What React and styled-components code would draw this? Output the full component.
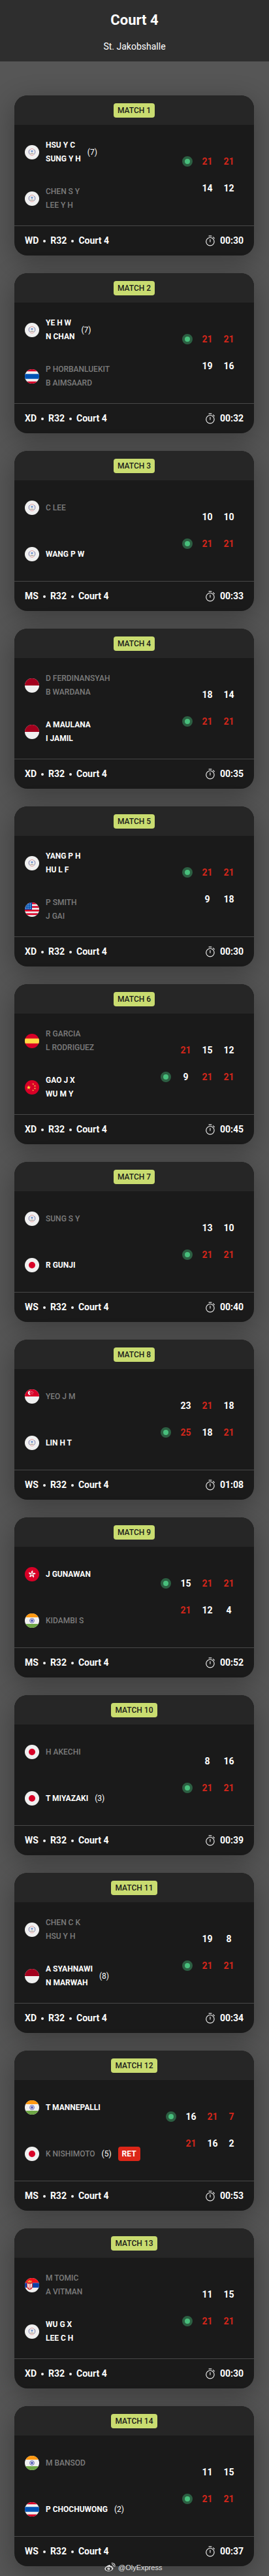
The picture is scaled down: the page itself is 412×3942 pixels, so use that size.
import React from 'react';
import styled, { createGlobalStyle } from 'styled-components';

const Global = createGlobalStyle`
  *, *::before, *::after { box-sizing: border-box; }
  html, body { margin: 0; padding: 0; }
  body {
    background: #565656;
    color: #fff;
    font-family: Roboto, "Liberation Sans", sans-serif;
  }
`;

const Page = styled.div`
  position: relative;
  width: 412px;
  height: 3942px;
  overflow: hidden;
  background: #565656;
`;

const Header = styled.header`
  height: 94px;
  padding-top: 16px;
  background: #2e2e2e;
  text-align: center;
`;

const Title = styled.h1`
  margin: 0;
  font-size: 22px;
  line-height: 29px;
  font-weight: 700;
`;

const Venue = styled.p`
  margin: 14px 0 0;
  font-size: 14px;
  line-height: 24px;
`;

const List = styled.main`
  display: flex;
  flex-direction: column;
  gap: 27px;
  padding: 52px 23px 0 22px;
`;

const Card = styled.article`
  display: flex;
  flex-direction: column;
  height: 245px;
  border-radius: 20px;
  background: #1a1a1a;
  box-shadow: 0 10px 40px rgba(0, 0, 0, 0.3);
`;

const CardTop = styled.div`
  display: flex;
  align-items: center;
  justify-content: center;
  height: 45px;
  padding-top: 1px;
  border-radius: 20px 20px 0 0;
  background: #262626;
`;

const Badge = styled.span`
  height: 22px;
  padding: 0 6.3px;
  border-radius: 4px;
  background: #c9dc70;
  color: #1a1a1a;
  font-size: 12px;
  line-height: 22px;
  font-weight: 500;
`;

const CardBody = styled.div`
  display: flex;
  justify-content: space-between;
  height: 154px;
  padding: 20px 22px 0 16px;
`;

const Teams = styled.div`
  display: flex;
  flex-direction: column;
  gap: 27px;
`;

const Team = styled.div`
  display: flex;
  align-items: center;
  height: 44px;
`;

const Flag = styled.svg`
  flex: none;
  width: 22px;
  height: 22px;
  margin-right: 10px;
  border-radius: 50%;
`;

const Names = styled.div`
  color: ${(p) => (p.$won ? '#fff' : '#7c7c7c')};
  font-size: 12px;
  line-height: 21px;
  font-weight: ${(p) => (p.$won ? 700 : 500)};
  white-space: nowrap;
`;

const Seed = styled.span`
  margin-left: 10px;
  font-size: 12px;
  line-height: 22px;
`;

const Retired = styled.span`
  height: 22px;
  margin-left: 10px;
  padding: 0 6px;
  border-radius: 4px;
  background: #dc2618;
  font-size: 12px;
  line-height: 22px;
  font-weight: 700;
`;

const Scores = styled.div`
  display: flex;
  flex-direction: column;
  align-items: flex-end;
  padding-top: 15px;
`;

const ScoreRow = styled.div`
  display: flex;
  align-items: center;
  height: 41px;
`;

const WinDot = styled.i`
  width: 16px;
  height: 16px;
  margin-right: 6px;
  border: 4px solid #2c5f42;
  border-radius: 50%;
  background: #48bf7c;
`;

const Score = styled.span`
  width: ${(p) => (p.$narrow ? 25 : 33)}px;
  padding-top: 1px;
  color: ${(p) => (p.$top ? '#d3261b' : '#fff')};
  font-size: 14px;
  line-height: 20px;
  font-weight: 700;
  text-align: center;
`;

const CardFoot = styled.footer`
  display: flex;
  align-items: center;
  justify-content: space-between;
  height: 46px;
  padding: 0 16px;
  border-top: 1px solid #484848;
  font-size: 14px;
  line-height: 17px;
  font-weight: 700;
`;

const Meta = styled.div`
  display: flex;
  align-items: center;
`;

const Bullet = styled.i`
  width: 4px;
  height: 4px;
  margin: 1px 7px 0;
  border-radius: 50%;
  background: #f0f0f0;
`;

const Duration = styled.div`
  display: flex;
  align-items: center;
  gap: 7px;
`;

const Watermark = styled.div`
  position: absolute;
  left: 160px;
  top: 3920px;
  display: flex;
  align-items: center;
  gap: 4px;
  color: #e2e2e2;
  font-family: "Liberation Sans", sans-serif;
  font-size: 11px;
  line-height: 18px;
`;

const starPoints = (cx, cy, r) =>
  Array.from({ length: 10 }, (_, i) => {
    const q = i % 2 ? r * 0.4 : r;
    const a = (i * Math.PI) / 5 - Math.PI / 2;
    return `${(cx + q * Math.cos(a)).toFixed(2)},${(cy + q * Math.sin(a)).toFixed(2)}`;
  }).join(' ');

const FLAGS = {
  tpe: (
    <>
      <rect width="22" height="22" fill="#f0f0f0" />
      <g fill="none" strokeLinejoin="round">
        <path
          d="M11 5.6Q13 5.2 13.7 7.1Q16.3 7.8 15.7 10.2Q16.2 13 13.9 14.2Q12.7 16.6 11 15.6Q9.2 16.6 8.1 14.2Q5.8 13 6.3 10.2Q5.7 7.8 8.3 7.1Q9 5.2 11 5.6Z"
          stroke="#e39a9c"
          strokeWidth="0.9"
        />
        <path
          d="M8.3 7.1Q5.7 7.8 6.3 10.2Q5.8 13 8.1 14.2M13.7 7.1Q16.3 7.8 15.7 10.2Q16.2 13 13.9 14.2"
          stroke="#6683bd"
          strokeWidth="0.8"
        />
      </g>
      <circle cx="11" cy="9.5" r="1.7" fill="#7f9fd0" />
      <path d="M8.5 13.3h5" stroke="#b5ab9d" strokeWidth="1.5" />
    </>
  ),
  tha: (
    <>
      <rect width="22" height="22" fill="#f0f0f0" />
      <path d="M0 0h22v3.2H0zM0 18.8h22V22H0z" fill="#d80027" />
      <path d="M0 7.2h22v7.6H0z" fill="#0052b4" />
    </>
  ),
  ina: (
    <>
      <rect width="22" height="22" fill="#f0f0f0" />
      <path d="M0 0h22v11H0z" fill="#a2001d" />
    </>
  ),
  usa: (
    <>
      <rect width="22" height="22" fill="#f0f0f0" />
      <path
        d="M0 0h22v2.75H0zM0 5.5h22v2.75H0zM0 11h22v2.75H0zM0 16.5h22v2.75H0z"
        fill="#d80027"
      />
      <path d="M0 0h11v11H0z" fill="#0052b4" />
      {[2.4, 5.6, 8.8].map((y) =>
        [1.8, 5, 8.3].map((x) => (
          <polygon key={`${x}-${y}`} points={starPoints(x, y, 1.25)} fill="#f0f0f0" />
        ))
      )}
    </>
  ),
  esp: (
    <>
      <rect width="22" height="22" fill="#d80027" />
      <path d="M0 7.2h22v7.6H0z" fill="#ffda44" />
    </>
  ),
  chn: (
    <>
      <rect width="22" height="22" fill="#d80027" />
      <polygon points={starPoints(6, 11.2, 3.4)} fill="#ffda44" />
      <polygon points={starPoints(12.8, 6, 1.5)} fill="#ffda44" />
      <polygon points={starPoints(15.5, 8.8, 1.5)} fill="#ffda44" />
      <polygon points={starPoints(15.5, 12.6, 1.5)} fill="#ffda44" />
      <polygon points={starPoints(12.6, 15.4, 1.5)} fill="#ffda44" />
    </>
  ),
  jpn: (
    <>
      <rect width="22" height="22" fill="#f0f0f0" />
      <circle cx="11" cy="11" r="5" fill="#d80027" />
    </>
  ),
  sgp: (
    <>
      <rect width="22" height="22" fill="#f0f0f0" />
      <path d="M0 0h22v11H0z" fill="#d80027" />
      <path d="M8.9 2.7a3.1 3.1 0 1 0 0 5.8a3.4 3.4 0 0 1 0-5.8z" fill="#f0f0f0" />
      {[[10.8, 3.3], [9.1, 4.8], [12.5, 4.8], [9.8, 7], [11.9, 7]].map(([x, y]) => (
        <polygon key={`${x}-${y}`} points={starPoints(x, y, 0.85)} fill="#f0f0f0" />
      ))}
    </>
  ),
  hkg: (
    <>
      <rect width="22" height="22" fill="#d80027" />
      {[0, 72, 144, 216, 288].map((a) => (
        <path
          key={a}
          transform={`rotate(${a + 8} 11 11)`}
          d="M11 10.4C8.6 9.3 8.7 6.1 11.6 5.2C11 6.7 13.3 7.6 11 10.4Z"
          fill="#f0f0f0"
        />
      ))}
    </>
  ),
  ind: (
    <>
      <rect width="22" height="22" fill="#f0f0f0" />
      <path d="M0 0h22v6H0z" fill="#ff9811" />
      <path d="M0 16h22v6H0z" fill="#6da544" />
      <circle cx="11" cy="11" r="3.4" fill="none" stroke="#5257b0" strokeWidth="0.9" />
      <circle cx="11" cy="11" r="1.9" fill="#5359b5" />
    </>
  ),
  srb: (
    <>
      <rect width="22" height="22" fill="#f0f0f0" />
      <path d="M0 0h22v7.4H0z" fill="#f01018" />
      <path d="M0 7.4h22v7.4H0z" fill="#0c40a5" />
      <path d="M3 6.7h9v7.5q-1 3-4.5 4Q4 17.2 3 14.2z" fill="#d6393d" />
      <path d="M4 8.3l2.1 1.3v5.7L4.3 14zM11 8.3L8.9 9.6v5.7l1.8-1.3z" fill="#f0f0f0" />
      <path d="M6.7 9h1.7v7.5H6.7z" fill="#f3dad7" />
      <path d="M4.7 6.6L4 3.8l1.8 1L7.5 3l1.6 1.8 1.9-1-.7 2.8z" fill="#e8aa35" />
    </>
  ),
};

const MATCHES = [
  { ev: 'WD', time: '00:30', w: 0, a: ['tpe', ['HSU Y C', 'SUNG Y H'], 7], b: ['tpe', ['CHEN S Y', 'LEE Y H']], s: [[21, 21], [14, 12]] },
  { ev: 'XD', time: '00:32', w: 0, a: ['tpe', ['YE H W', 'N CHAN'], 7], b: ['tha', ['P HORBANLUEKIT', 'B AIMSAARD']], s: [[21, 21], [19, 16]] },
  { ev: 'MS', time: '00:33', w: 1, a: ['tpe', ['C LEE']], b: ['tpe', ['WANG P W']], s: [[10, 10], [21, 21]] },
  { ev: 'XD', time: '00:35', w: 1, a: ['ina', ['D FERDINANSYAH', 'B WARDANA']], b: ['ina', ['A MAULANA', 'I JAMIL']], s: [[18, 14], [21, 21]] },
  { ev: 'XD', time: '00:30', w: 0, a: ['tpe', ['YANG P H', 'HU L F']], b: ['usa', ['P SMITH', 'J GAI']], s: [[21, 21], [9, 18]] },
  { ev: 'XD', time: '00:45', w: 1, a: ['esp', ['R GARCIA', 'L RODRIGUEZ']], b: ['chn', ['GAO J X', 'WU M Y']], s: [[21, 15, 12], [9, 21, 21]] },
  { ev: 'WS', time: '00:40', w: 1, a: ['tpe', ['SUNG S Y']], b: ['jpn', ['R GUNJI']], s: [[13, 10], [21, 21]] },
  { ev: 'WS', time: '01:08', w: 1, a: ['sgp', ['YEO J M']], b: ['tpe', ['LIN H T']], s: [[23, 21, 18], [25, 18, 21]] },
  { ev: 'MS', time: '00:52', w: 0, a: ['hkg', ['J GUNAWAN']], b: ['ind', ['KIDAMBI S']], s: [[15, 21, 21], [21, 12, 4]] },
  { ev: 'WS', time: '00:39', w: 1, a: ['jpn', ['H AKECHI']], b: ['jpn', ['T MIYAZAKI'], 3], s: [[8, 16], [21, 21]] },
  { ev: 'XD', time: '00:34', w: 1, a: ['tpe', ['CHEN C K', 'HSU Y H']], b: ['ina', ['A SYAHNAWI', 'N MARWAH'], 8], s: [[19, 8], [21, 21]] },
  { ev: 'MS', time: '00:53', w: 0, a: ['ind', ['T MANNEPALLI']], b: ['jpn', ['K NISHIMOTO'], 5, true], s: [[16, 21, 7], [21, 16, 2]] },
  { ev: 'XD', time: '00:30', w: 1, a: ['srb', ['M TOMIC', 'A VITMAN']], b: ['tpe', ['WU G X', 'LEE C H']], s: [[11, 15], [21, 21]] },
  { ev: 'WS', time: '00:37', w: 1, a: ['ind', ['M BANSOD']], b: ['tha', ['P CHOCHUWONG'], 2], s: [[11, 15], [21, 21]] },
];

function Stopwatch() {
  return (
    <svg width="16" height="17" viewBox="0 0 16 17" fill="none" stroke="#f0f0f0" strokeWidth="1.15">
      <circle cx="7.9" cy="9.7" r="6.2" />
      <path d="M6 1.1h3.9M7.9 6.6v3.5M12.5 2.9l1.9 1.8" strokeLinecap="round" />
    </svg>
  );
}

function WeiboMark() {
  return (
    <svg width="17" height="16" viewBox="0 0 17 16" fill="none">
      <path
        d="M6.9 4.2C8.2 3.7 9 4.4 8.7 5.8C10.8 5 12.2 5.6 11.7 7.5C13.3 8 13.8 8.9 13.3 10.1C12.4 12.5 9.6 13.8 6.4 13.8C2.9 13.8 .4 12.2 .4 9.8C.4 7.7 3.7 5.2 6.9 4.2Z"
        fill="#e8e8e8"
      />
      <ellipse cx="6.6" cy="9.9" rx="4.7" ry="3" fill="#333" />
      <circle cx="6.2" cy="10.1" r="2.1" fill="#e8e8e8" />
      <circle cx="5.5" cy="10.5" r="0.8" fill="#333" />
      <path d="M11.2 1.4C14.6.8 16.8 3.6 15.7 6.5M11.6 3.7C13.2 3.4 14.1 4.6 13.6 6" stroke="#e8e8e8" strokeWidth="1.1" strokeLinecap="round" />
    </svg>
  );
}

function TeamLine({ team, won }) {
  const [flag, names, seed, retired] = team;
  return (
    <Team>
      <Flag viewBox="0 0 22 22">{FLAGS[flag]}</Flag>
      <Names $won={won}>
        {names.map((n) => (
          <div key={n}>{n}</div>
        ))}
      </Names>
      {seed && <Seed>({seed})</Seed>}
      {retired && <Retired>RET</Retired>}
    </Team>
  );
}

function Match({ m, n }) {
  const narrow = m.s[0].map((v, i) => v < 10 && m.s[1][i] < 10);
  return (
    <Card>
      <CardTop>
        <Badge>MATCH {n}</Badge>
      </CardTop>
      <CardBody>
        <Teams>
          <TeamLine team={m.a} won={m.w === 0} />
          <TeamLine team={m.b} won={m.w === 1} />
        </Teams>
        <Scores>
          {m.s.map((row, r) => (
            <ScoreRow key={r}>
              {m.w === r && <WinDot />}
              {row.map((v, i) => (
                <Score key={i} $top={v > m.s[1 - r][i]} $narrow={narrow[i]}>
                  {v}
                </Score>
              ))}
            </ScoreRow>
          ))}
        </Scores>
      </CardBody>
      <CardFoot>
        <Meta>
          {m.ev}
          <Bullet />
          R32
          <Bullet />
          Court 4
        </Meta>
        <Duration>
          <Stopwatch />
          {m.time}
        </Duration>
      </CardFoot>
    </Card>
  );
}

export default function App() {
  return (
    <Page>
      <Global />
      <Header>
        <Title>Court 4</Title>
        <Venue>St. Jakobshalle</Venue>
      </Header>
      <List>
        {MATCHES.map((m, i) => (
          <Match key={i} m={m} n={i + 1} />
        ))}
      </List>
      <Watermark>
        <WeiboMark />
        @OlyExpress
      </Watermark>
    </Page>
  );
}
